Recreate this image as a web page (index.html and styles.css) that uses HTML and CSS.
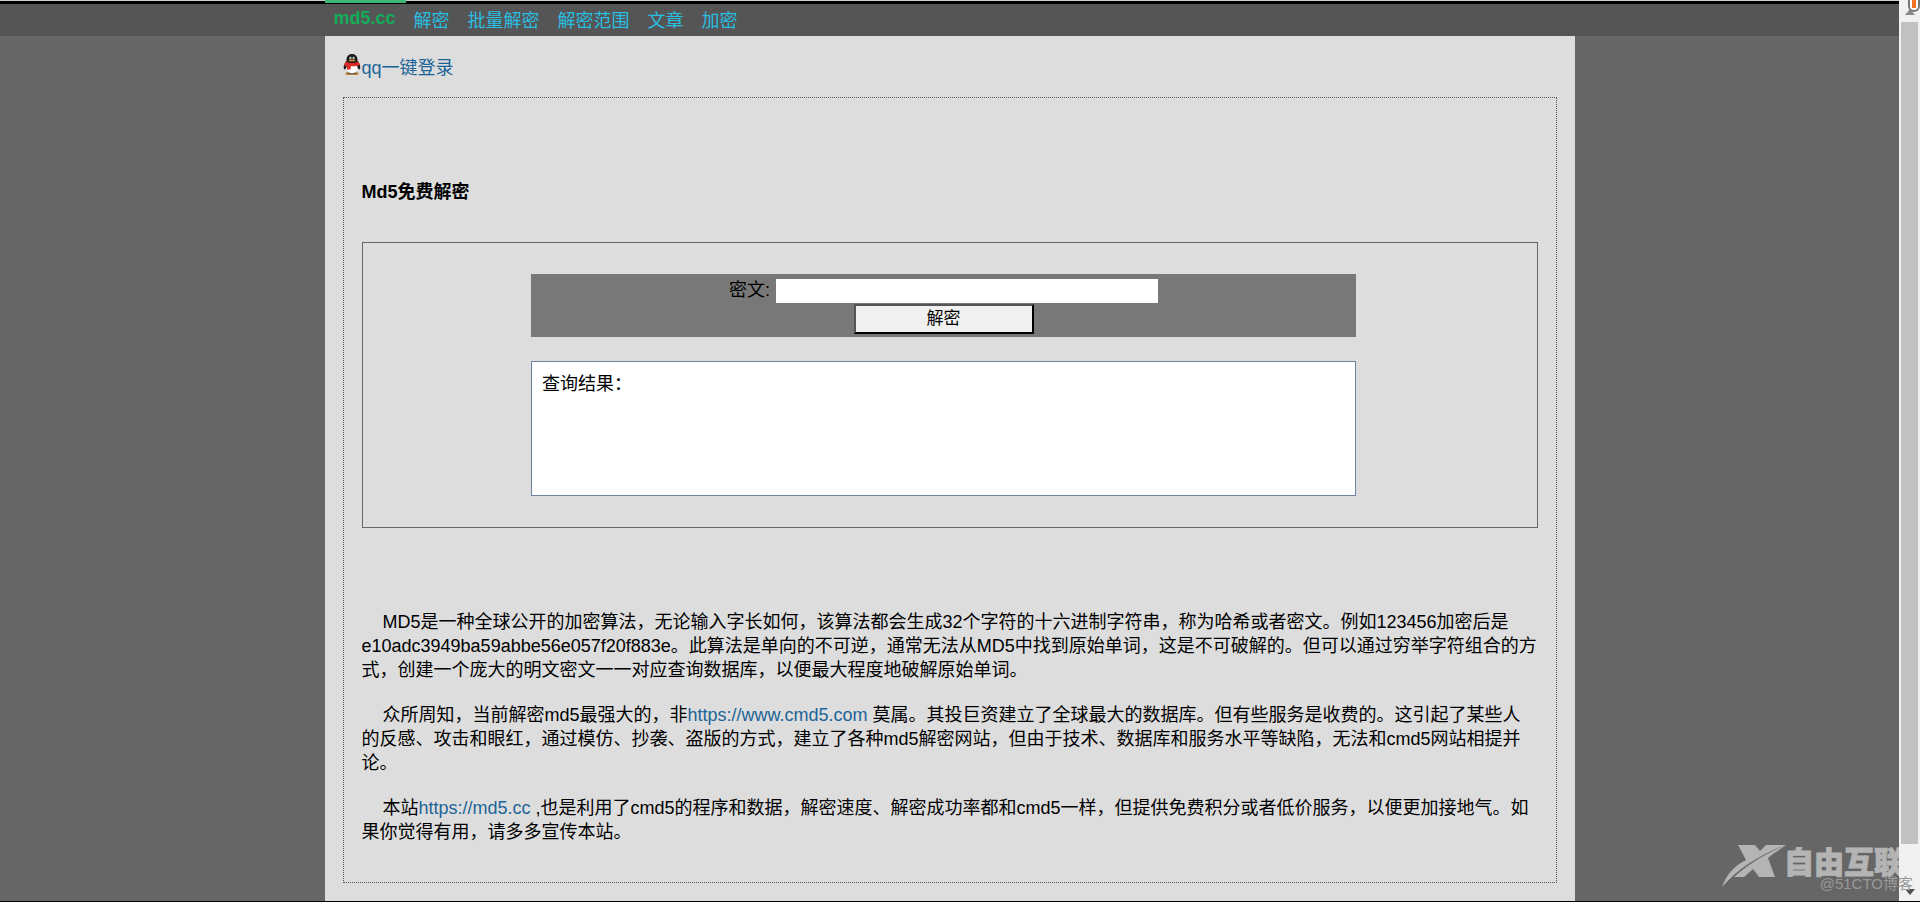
FILE: index.html
```html
<!DOCTYPE html>
<html lang="zh-CN">
<head>
<meta charset="utf-8">
<title>Md5免费解密</title>
<link rel="stylesheet" href="styles.css">
</head>
<body>
<div class="page">
  <header class="topbar">
    <nav class="nav">
      <a class="brand" href="#">md5.cc</a>
      <a href="#">解密</a>
      <a href="#">批量解密</a>
      <a href="#">解密范围</a>
      <a href="#">文章</a>
      <a href="#">加密</a>
    </nav>
  </header>
  <main class="content">
    <a class="login" href="#">
      <svg class="qq" viewBox="0 0 18 22" aria-hidden="true">
        <ellipse cx="6" cy="19.500" rx="3.500" ry="1.500" fill="#b8793a"/>
        <ellipse cx="12" cy="19.500" rx="3.500" ry="1.500" fill="#b8793a"/>
        <path d="M9 0C5 0 3.300 3 3.500 7C2 9 0 12 1 15C1.500 16 2.500 15 3 14C4 18 6 20 9 20S14 18 15 14C15.500 15 16.500 16 17 15C18 12 16 9 14.500 7C14.700 3 13 0 9 0Z" fill="#161616"/>
        <ellipse cx="9" cy="14.500" rx="5.800" ry="5" fill="#fff"/>
        <ellipse cx="7.400" cy="4" rx="1.200" ry="1.600" fill="#bbb"/>
        <ellipse cx="10.600" cy="4" rx="1.200" ry="1.600" fill="#bbb"/>
        <ellipse cx="9" cy="6.600" rx="3.500" ry="1" fill="#b98a3a"/>
        <path d="M2.500 7.500Q9 10.500 15.500 7.500L17 11Q12 13 8 12L7.500 15.500H4V12L1 11.500Z" fill="#dc2b22"/>
      </svg>
      <span>qq一键登录</span>
    </a>
    <section class="panel">
      <h1 class="title">Md5免费解密</h1>
      <div class="query">
        <form class="form">
          <div class="field">
            <label for="cipher">密文:</label>
            <input id="cipher" type="text">
          </div>
          <button type="button">解密</button>
        </form>
        <div class="result">查询结果：</div>
      </div>
      <div class="article">
        <p>MD5是一种全球公开的加密算法，无论输入字长如何，该算法都会生成32个字符的十六进制字符串，称为哈希或者密文。例如123456加密后是e10adc3949ba59abbe56e057f20f883e。此算法是单向的不可逆，通常无法从MD5中找到原始单词，这是不可破解的。但可以通过穷举字符组合的方式，创建一个庞大的明文密文一一对应查询数据库，以便最大程度地破解原始单词。</p>
        <p>众所周知，当前解密md5最强大的，非<a href="#">https://www.cmd5.com</a> 莫属。其投巨资建立了全球最大的数据库。但有些服务是收费的。这引起了某些人的反感、攻击和眼红，通过模仿、抄袭、盗版的方式，建立了各种md5解密网站，但由于技术、数据库和服务水平等缺陷，无法和cmd5网站相提并论。</p>
        <p>本站<a href="#">https://md5.cc</a> ,也是利用了cmd5的程序和数据，解密速度、解密成功率都和cmd5一样，但提供免费积分或者低价服务，以便更加接地气。如果你觉得有用，请多多宣传本站。</p>
      </div>
    </section>
  </main>
</div>
<div class="scrollbar" aria-hidden="true">
  <svg class="pointer" viewBox="0 0 12 12"><path d="M1 0V6A5 5 0 0 0 11 6V0" fill="#fff" stroke="#777" stroke-width="2"/><path d="M6 0V8" stroke="#ef7427" stroke-width="4"/></svg>
  <svg class="arrow" viewBox="0 0 10 6"><path d="M0 6L5 0L10 6Z" fill="#8a8a8a"/></svg>
  <div class="thumb"></div>
  <svg class="arrow" viewBox="0 0 10 6"><path d="M0 0H10L5 6Z" fill="#505050"/></svg>
</div>
<div class="watermark">
  <svg class="mark" viewBox="0 0 64 44" aria-hidden="true"><path d="M16 1H33L38 7L44 1H64C44 8 18 22 0 43C4 31 12 22 24 16ZM64 1C56 7 50 10 46 14L53 33H37L31 25L22 33H12C22 24 40 11 64 1Z" fill="#b4b4b4"/></svg>
  <span class="mark-name">自由互联</span>
  <span class="mark-credit">@51CTO博客</span>
</div>
</body>
</html>
```
FILE: styles.css
```css
* { box-sizing: border-box; }

body {
  display: flex;
  min-height: 100vh;
  margin: 0;
  overflow: hidden;
  border-bottom: 1px solid #000;
  background: #666;
  color: #000;
  font: 18px/24px "Liberation Sans", "Noto Sans CJK SC", sans-serif;
}

a { color: #1c6497; text-decoration: none; }

.page {
  display: flex;
  flex: 1;
  flex-direction: column;
  min-width: 0;
}

.topbar {
  border-top: 1px solid #ccc;
  background: linear-gradient(#000 0 3px, #555 3px);
}

.nav {
  display: flex;
  gap: 18px;
  align-items: center;
  width: 100%;
  max-width: 1250px;
  height: 35px;
  margin: 0 auto;
}

.nav a { padding-top: 4px; color: #28bfe2; }

.nav .brand {
  align-self: stretch;
  margin: -1px -10px 0 0;
  padding: 3px 10px 0 9px;
  border-top: 3px solid #3cb878;
  color: #12ad58;
  font-weight: bold;
}

.content {
  flex: 1;
  width: 100%;
  max-width: 1250px;
  margin: 0 auto;
  padding: 18px;
  background: #ddd;
}

.login { display: flex; gap: 1px; align-items: flex-start; height: 43px; }
.login span { padding-top: 2px; }
.qq { width: 18px; height: 22px; }

.panel { padding: 82px 18px 38px; border: 1px dotted #555; }

.title { margin: 0 0 38px; font-size: 18px; line-height: 24px; }

.query { padding: 31px 12px 31px 0; border: 1px solid #666; }

.form,
.result { width: 72%; max-width: 825px; margin: 0 auto; }

.form {
  display: flex;
  flex-direction: column;
  align-items: center;
  padding: 5px 0 3px;
  background: #787878;
}

.field { display: flex; gap: 6px; width: 429px; max-width: 100%; line-height: 22px; }
.field label { flex: none; }
.field input { flex: 1; min-width: 0; height: 24px; padding: 0 4px; border: 0; background: #fff; }

.form button {
  width: 180px;
  height: 30px;
  margin-top: 1px;
  padding: 0;
  border: 2px outset #000;
  background: #f0f0f0;
  color: #000;
  font: 17px/24px "Liberation Sans", "Noto Sans CJK SC", sans-serif;
}

.result {
  min-height: 135px;
  margin-top: 24px;
  padding: 10px;
  border: 1px solid #6b84a0;
  background: #fff;
}

.article { padding-top: 82px; }
.article p { margin: 0 0 21px; text-indent: 21px; }
.article p:last-child { margin-bottom: 0; }

.scrollbar {
  display: flex;
  flex-direction: column;
  align-items: center;
  width: 21px;
  padding: 9px 2px 6px;
  background: #f1f1f1;
  position: relative;
}

.arrow { width: 10px; height: 6px; }
.thumb { flex: 1; width: 17px; margin: 7px 0 45px; background: #c1c1c1; }
.pointer { position: absolute; top: 0; right: 0; width: 12px; height: 12px; }

.watermark {
  position: absolute;
  right: 0;
  bottom: 10px;
  width: 198px;
  height: 48px;
  overflow: hidden;
  color: #b4b4b4;
  white-space: nowrap;
}

.mark { width: 64px; height: 44px; }

.mark-name {
  position: absolute;
  left: 62px;
  top: 3px;
  width: 115px;
  overflow: hidden;
  font-size: 30px;
  font-weight: 900;
  line-height: 32px;
  -webkit-text-stroke: 1px #b4b4b4;
}

.mark-credit {
  position: absolute;
  right: 7px;
  bottom: 0;
  color: #999;
  font-size: 15px;
  line-height: 16px;
}
```
